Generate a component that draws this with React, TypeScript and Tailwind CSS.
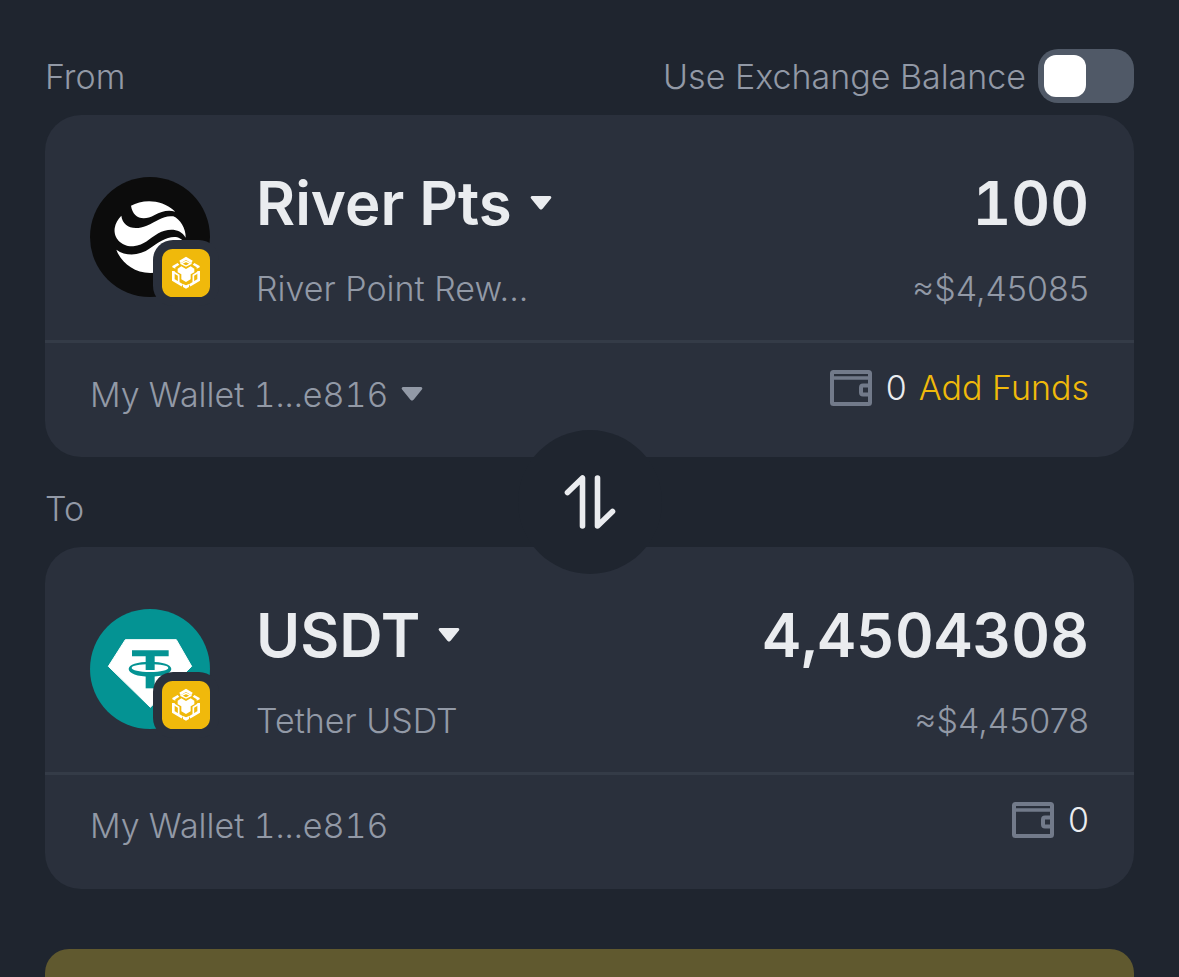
import React, { useState } from 'react'

const WALLETS = ['My Wallet 1...e816']

export default function App() {
  const [amount, setAmount] = useState('100')
  const [useExchange, setUseExchange] = useState(false)

  return (
    <main className="h-screen overflow-hidden bg-[#1f252f] px-[45px] pt-[49px] font-['Inter',sans-serif] text-[34px] font-light text-[#9299a6]">
      {/* From header */}
      <div className="flex h-[54px] items-center justify-between">
        <label htmlFor="amount">From</label>
        <div className="flex items-center gap-3">
          <label htmlFor="exchange">Use Exchange Balance</label>
          <input
            id="exchange"
            type="checkbox"
            role="switch"
            checked={useExchange}
            onChange={(e) => setUseExchange(e.target.checked)}
            className="flex h-[54px] w-24 cursor-pointer appearance-none items-center rounded-[20px] bg-[#505967] px-[6px] before:size-[42px] before:rounded-xl before:bg-white checked:justify-end checked:bg-[#f0b90b]"
          />
        </div>
      </div>

      {/* From card */}
      <section className="mt-3 rounded-[36px] bg-[#2a303c]">
        <div className="flex gap-[46px] px-[45px] pt-[50px] pb-[27px]">
          <TokenIcon>
            <RiverLogo />
          </TokenIcon>
          <div className="flex min-w-0 flex-1 flex-col gap-6">
            <TokenButton symbol="River Pts" />
            <p className="truncate leading-[48px]">River Point Rew...</p>
          </div>
          <div className="flex flex-col gap-6 text-right">
            <input
              id="amount"
              type="text"
              inputMode="decimal"
              value={amount}
              onChange={(e) => setAmount(e.target.value)}
              className="h-[76px] w-80 bg-transparent text-right text-[60px] font-semibold tabular-nums text-[#eaecef] outline-none"
            />
            <p className="leading-[48px]">≈$4,45085</p>
          </div>
        </div>
        <div className="flex h-[117px] items-start justify-between border-t-3 border-[#343b47] px-[45px] pt-[21px]">
          <div className="flex items-center gap-3 tabular-nums">
            <select aria-label="Wallet" className="field-sizing-content h-[60px] appearance-none bg-transparent outline-none">
              {WALLETS.map((wallet) => (
                <option key={wallet}>{wallet}</option>
              ))}
            </select>
            <Caret />
          </div>
          <div className="flex items-center gap-3 leading-[48px]">
            <Balance value="0" />
            <a href="#add-funds" className="text-[#f0b90b]">
              Add Funds
            </a>
          </div>
        </div>
      </section>

      {/* To header with the swap button */}
      <div className="relative flex h-[90px] items-center justify-between pt-3">
        <span>To</span>
        <button
          type="button"
          aria-label="Swap tokens"
          className="absolute top-1/2 left-1/2 z-10 flex size-36 -translate-x-1/2 -translate-y-1/2 items-center justify-center rounded-full bg-[#1f252f]"
        >
          <SwapIcon />
        </button>
      </div>

      {/* To card */}
      <section className="rounded-[36px] bg-[#2a303c]">
        <div className="flex gap-[46px] px-[45px] pt-[50px] pb-[27px]">
          <TokenIcon>
            <TetherLogo />
          </TokenIcon>
          <div className="flex min-w-0 flex-1 flex-col gap-6">
            <TokenButton symbol="USDT" />
            <p className="truncate leading-[48px]">Tether USDT</p>
          </div>
          <div className="flex flex-col gap-6 text-right">
            <output className="h-[76px] text-[60px] leading-[76px] font-semibold tabular-nums text-[#eaecef]">
              4,4504308
            </output>
            <p className="leading-[48px]">≈$4,45078</p>
          </div>
        </div>
        <div className="flex h-[117px] items-start justify-between border-t-3 border-[#343b47] px-[45px] pt-[21px]">
          <span className="leading-[60px] tabular-nums">My Wallet 1...e816</span>
          <div className="flex items-center leading-[48px]">
            <Balance value="0" />
          </div>
        </div>
      </section>

      <button type="button" aria-label="Preview" disabled className="mt-[60px] h-36 w-full rounded-3xl bg-[#60592f]" />
    </main>
  )
}

function TokenButton({ symbol }: { symbol: string }) {
  return (
    <button
      type="button"
      aria-haspopup="dialog"
      className="flex h-[76px] items-center gap-[18px] self-start text-[60px] leading-[76px] font-semibold whitespace-nowrap text-[#eaecef]"
    >
      {symbol}
      <Caret />
    </button>
  )
}

function TokenIcon({ children }: { children: React.ReactNode }) {
  return (
    <div className="relative mt-3 size-[120px] shrink-0">
      {children}
      <span className="absolute top-[63px] left-[63px] rounded-[20px] bg-[#2a303c] p-[9px]">
        <BnbBadge />
      </span>
    </div>
  )
}

function Balance({ value }: { value: string }) {
  return (
    <span className="flex items-center gap-[14px] text-[#eaecef]">
      <WalletIcon />
      {value}
    </span>
  )
}

function Caret() {
  return (
    <svg className="h-4 w-[22px] shrink-0" viewBox="0 0 22 16" fill="currentColor" aria-hidden="true">
      <path d="M2.2 1h17.6c1.5 0 2 1.5 1.1 2.5l-8.3 10.3c-.9 1.1-2.3 1.1-3.2 0L1.1 3.5C.2 2.5.7 1 2.2 1z" />
    </svg>
  )
}

function WalletIcon() {
  return (
    <svg className="h-9 w-[42px]" viewBox="0 0 42 36" fill="none" stroke="#727a8a" strokeWidth="4" aria-hidden="true">
      <rect x="2" y="2" width="38" height="32" rx="1.5" />
      <path d="M2 8h38" strokeWidth="3.5" />
      <path d="M40 15.5h-7a2 2 0 0 0-2 2v5a2 2 0 0 0 2 2h7" />
    </svg>
  )
}

function SwapIcon() {
  return (
    <svg
      className="h-14 w-[52px]"
      viewBox="0 0 52 56"
      fill="none"
      stroke="#eaecef"
      strokeWidth="5.6"
      strokeLinecap="round"
      strokeLinejoin="round"
      aria-hidden="true"
    >
      <path d="M3.5 18.5 18.5 4v48" />
      <path d="M33.5 4v48L48.5 37.5" />
    </svg>
  )
}

function RiverLogo() {
  return (
    <svg className="size-[120px]" viewBox="30 36 360 360" aria-hidden="true">
      <circle cx="210" cy="216" r="180" fill="#0c0c0c" />
      <g fill="#fff">
        <path d="M153 122C185 105 240 98 286 140C262 134 244 140 224 150C188 170 158 158 153 122Z" />
        <path d="M124 152C128 185 160 198 200 182C232 168 250 150 280 154C300 162 318 190 317 218C300 188 262 190 235 205C205 222 195 240 160 244C125 246 100 220 104 190C106 175 114 162 124 152Z" />
        <path d="M109 254C140 276 180 272 210 250C240 228 290 195 314 234C305 290 260 324 211 324C160 324 122 290 109 254Z" />
      </g>
    </svg>
  )
}

function TetherLogo() {
  return (
    <svg className="size-[120px]" viewBox="30 27 360 360" aria-hidden="true">
      <circle cx="210" cy="207" r="180" fill="#049393" />
      <path
        d="M136 119H289L335 199L211 322L85 199Z"
        fill="#fff"
        stroke="#fff"
        strokeWidth="3"
        strokeLinejoin="round"
      />
      <path d="M156 151H266V169H224V210H197V169H156Z" fill="#049393" />
      <path d="M197 222H224V265H197Z" fill="#049393" />
      <path
        fillRule="evenodd"
        d="M146 207C146 194 172 185 210 185S274 194 274 207S248 230 210 230S146 220 146 207ZM155 204C155 211 178 216 210 216S265 211 265 204S242 193 210 193S155 197 155 204Z"
        fill="#049393"
      />
    </svg>
  )
}

function BnbBadge() {
  return (
    <svg className="size-12" viewBox="0 0 144 144" aria-hidden="true">
      <rect width="144" height="144" rx="32" fill="#f0b90b" />
      <g fill="none" stroke="#fff" strokeWidth="8">
        <path d="M54 39 72 28 90 39" />
        <path d="M34 66V93L61 109" />
        <path d="M110 66V93L83 109" />
        <path d="M58 44 72 37 86 44 72 51Z" strokeWidth="4" />
        <path d="M34 69 50 79V99" strokeWidth="5" />
        <path d="M110 69 94 79V99" strokeWidth="5" />
      </g>
      <g fill="#fff">
        <path d="M31 51 47 42 52 47 40 55V59L31 55Z" />
        <path d="M113 51 97 42 92 47 104 55V59L113 55Z" />
        <path d="M47 59 58 52 72 60 86 52 97 59V70L86 76V91L72 99 58 91V76L47 70Z" />
        <path d="M63 105 72 109 81 105V114L72 119 63 114Z" />
      </g>
    </svg>
  )
}
